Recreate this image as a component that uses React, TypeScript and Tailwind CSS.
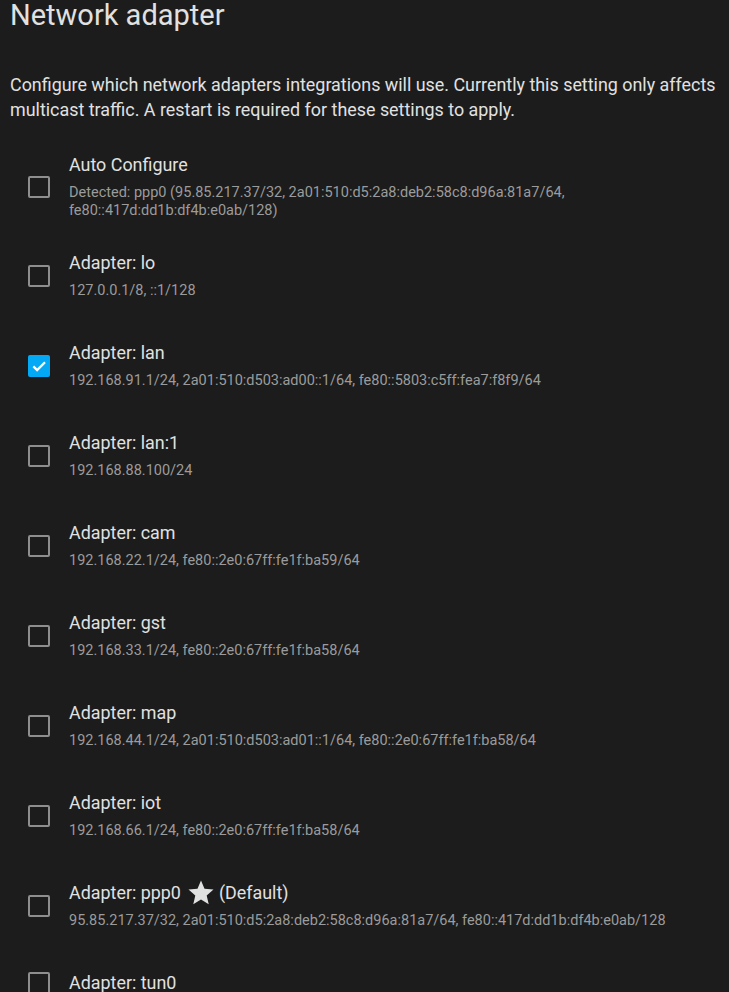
import React from "react";

const adapters = [
  { name: "Adapter: lo", ips: "127.0.0.1/8, ::1/128", checked: false },
  { name: "Adapter: lan", ips: "192.168.91.1/24, 2a01:510:d503:ad00::1/64, fe80::5803:c5ff:fea7:f8f9/64", checked: true },
  { name: "Adapter: lan:1", ips: "192.168.88.100/24", checked: false },
  { name: "Adapter: cam", ips: "192.168.22.1/24, fe80::2e0:67ff:fe1f:ba59/64", checked: false },
  { name: "Adapter: gst", ips: "192.168.33.1/24, fe80::2e0:67ff:fe1f:ba58/64", checked: false },
  { name: "Adapter: map", ips: "192.168.44.1/24, 2a01:510:d503:ad01::1/64, fe80::2e0:67ff:fe1f:ba58/64", checked: false },
  { name: "Adapter: iot", ips: "192.168.66.1/24, fe80::2e0:67ff:fe1f:ba58/64", checked: false },
  {
    name: "Adapter: ppp0",
    ips: "95.85.217.37/32, 2a01:510:d5:2a8:deb2:58c8:d96a:81a7/64, fe80::417d:dd1b:df4b:e0ab/128",
    checked: false,
    isDefault: true,
  },
  { name: "Adapter: tun0", ips: "", checked: false },
];

const Checkbox = ({ checked }: { checked: boolean }) =>
  checked ? (
    <div className="w-[22px] h-[22px] rounded-[2px] bg-[#03a9f4] flex items-center justify-center shrink-0">
      <svg width="18" height="18" viewBox="0 0 24 24" fill="none">
        <path d="M4.5 12.5l5 5L20 7" stroke="#ffffff" strokeWidth="3" />
      </svg>
    </div>
  ) : (
    <div className="w-[22px] h-[22px] rounded-[2px] border-2 border-[#8e8e8e] shrink-0" />
  );

const Row = ({
  name,
  lines,
  checked,
  isDefault,
  tight,
}: {
  name: string;
  lines: string[];
  checked: boolean;
  isDefault?: boolean;
  tight?: boolean;
}) => (
  <div className={`flex items-center ${tight ? "mb-[31px]" : "mb-[41px]"}`}>
    <div className="w-[59px] pl-[18px] shrink-0">
      <Checkbox checked={checked} />
    </div>
    <div className="flex flex-col">
      <div className="text-[17.9px] leading-[24px] text-[#e1e1e1] flex items-center h-[24px]">
        {name}
        {isDefault && (
          <>
            <svg className="ml-[5px] mr-[3px]" width="30" height="30" viewBox="0 0 24 24" fill="#e1e1e1">
              <path d="M12 17.27L18.18 21l-1.64-7.03L22 9.24l-7.19-.61L12 2 9.19 8.63 2 9.24l5.46 4.73L5.82 21z" />
            </svg>
            (Default)
          </>
        )}
      </div>
      {lines.length > 0 && (
        <div className="mt-[7px] text-[14.5px] leading-[18px] text-[#9b9b9b]">
          {lines.map((l, i) => (
            <div key={i} className="whitespace-nowrap">
              {l}
            </div>
          ))}
        </div>
      )}
    </div>
  </div>
);

export default function App() {
  return (
    <div
      className="w-[729px] h-[992px] overflow-hidden bg-[#1c1c1c] text-[#e1e1e1] px-[10px]"
      style={{ fontFamily: "Roboto, 'Noto Sans', sans-serif" }}
    >
      <h1 className="text-[29px] leading-[30px] font-normal">Network adapter</h1>
      <p className="mt-[42px] text-[17.9px] leading-[25px] text-[#e1e1e1]">
        Configure which network adapters integrations will use. Currently this setting only affects multicast
        traffic. A restart is required for these settings to apply.
      </p>
      <div className="mt-[31px]">
        <Row
          name="Auto Configure"
          lines={[
            "Detected: ppp0 (95.85.217.37/32, 2a01:510:d5:2a8:deb2:58c8:d96a:81a7/64,",
            "fe80::417d:dd1b:df4b:e0ab/128)",
          ]}
          checked={false}
          tight
        />
        {adapters.map((a) => (
          <Row key={a.name} name={a.name} lines={a.ips ? [a.ips] : []} checked={a.checked} isDefault={a.isDefault} />
        ))}
      </div>
    </div>
  );
}
